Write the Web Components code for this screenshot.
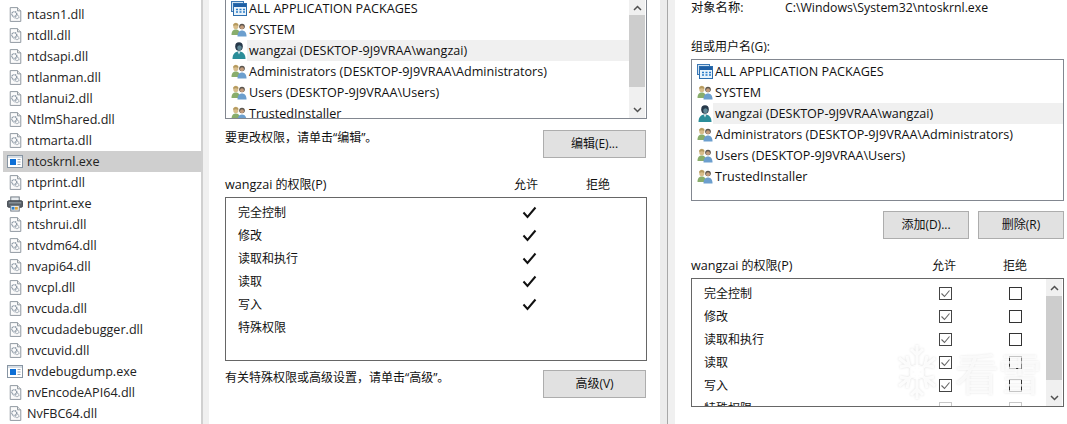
<!DOCTYPE html>
<html lang="zh"><head><meta charset="utf-8"><title>Permissions</title>
<style>
html,body{margin:0;padding:0;background:#fff}
body{width:1067px;height:424px;overflow:hidden;display:flex;font:12px/16px "Open Sans","Noto Sans CJK SC",sans-serif;color:#111}
.l{font-size:12.6px}
</style></head><body>
<file-pane>
<file-row icon="dll">ntasn1.dll</file-row><file-row icon="dll">ntdll.dll</file-row><file-row icon="dll">ntdsapi.dll</file-row><file-row icon="dll">ntlanman.dll</file-row><file-row icon="dll">ntlanui2.dll</file-row><file-row icon="dll">NtlmShared.dll</file-row><file-row icon="dll">ntmarta.dll</file-row><file-row icon="exe" selected>ntoskrnl.exe</file-row><file-row icon="dll">ntprint.dll</file-row><file-row icon="printer">ntprint.exe</file-row><file-row icon="dll">ntshrui.dll</file-row><file-row icon="dll">ntvdm64.dll</file-row><file-row icon="dll">nvapi64.dll</file-row><file-row icon="dll">nvcpl.dll</file-row><file-row icon="dll">nvcuda.dll</file-row><file-row icon="dll">nvcudadebugger.dll</file-row><file-row icon="dll">nvcuvid.dll</file-row><file-row icon="exe">nvdebugdump.exe</file-row><file-row icon="dll">nvEncodeAPI64.dll</file-row><file-row icon="dll">NvFBC64.dll</file-row>
</file-pane>
<pane-gap style="--w:8px;--a:0px;--b:2px;--line:#d0d0d0"></pane-gap>
<dialog-pane style="--w:451px;--pl:16px">
  <principal-list clip style="--h:119px;--w:422px">
    <principal-row icon="app">ALL APPLICATION PACKAGES</principal-row><principal-row icon="users">SYSTEM</principal-row><principal-row icon="user" selected>wangzai (DESKTOP-9J9VRAA\wangzai)</principal-row><principal-row icon="users">Administrators (DESKTOP-9J9VRAA\Administrators)</principal-row><principal-row icon="users">Users (DESKTOP-9J9VRAA\Users)</principal-row><principal-row icon="users">TrustedInstaller</principal-row>
    <scroll-bar slot="bar" up="15" thumb="72"></scroll-bar>
  </principal-list>
  <action-row style="--mt:11px;--w:421px"><span>要更改权限，请单击“编辑”。</span><win-button slot="end" style="--w:103px">编辑(E)...</win-button></action-row>
  <perm-head style="--mt:19px;--h1:259px;--hg:12px"><span class="l">wangzai</span> 的权限<span class="l">(P)</span></perm-head>
  <perm-box style="--mt:4px;--w:422px;--h:164px;--c1:252px;--g:9px">
    <perm-row mark="tick">完全控制</perm-row><perm-row mark="tick">修改</perm-row><perm-row mark="tick">读取和执行</perm-row><perm-row mark="tick">读取</perm-row><perm-row mark="tick">写入</perm-row><perm-row>特殊权限</perm-row>
  </perm-box>
  <action-row style="--mt:9px;--w:421px"><span>有关特殊权限或高级设置，请单击“高级”。</span><win-button slot="end" style="--w:103px">高级(V)</win-button></action-row>
</dialog-pane>
<pane-gap style="--w:15px;--a:7px;--b:8px;--line:#a8a8a8"></pane-gap>
<dialog-pane style="--w:392px;--pl:16px">
  <object-row><span>对象名称:</span><span slot="value">C:\Windows\System32\ntoskrnl.exe</span></object-row>
  <field-label style="--mt:23px">组或用户名(G):</field-label>
  <principal-list style="--h:142px;--w:373px;--mt:4px">
    <principal-row icon="app">ALL APPLICATION PACKAGES</principal-row><principal-row icon="users">SYSTEM</principal-row><principal-row icon="user" selected>wangzai (DESKTOP-9J9VRAA\wangzai)</principal-row><principal-row icon="users">Administrators (DESKTOP-9J9VRAA\Administrators)</principal-row><principal-row icon="users">Users (DESKTOP-9J9VRAA\Users)</principal-row><principal-row icon="users">TrustedInstaller</principal-row>
  </principal-list>
  <action-row style="--mt:10px;--w:373px;--gap:9px"><win-button slot="end" style="--w:86px">添加(D)...</win-button><win-button slot="end" style="--w:86px">删除(R)</win-button></action-row>
  <perm-head style="--mt:19px;--h1:212px;--hg:11px"><span class="l">wangzai</span> 的权限<span class="l">(P)</span></perm-head>
  <perm-box style="--mt:4px;--w:373px;--h:129px;--c1:201px;--g:10px">
    <perm-row mark="check" deny="box">完全控制</perm-row><perm-row mark="check" deny="box">修改</perm-row><perm-row mark="check" deny="box">读取和执行</perm-row><perm-row mark="check" deny="box">读取</perm-row><perm-row mark="check" deny="box">写入</perm-row><perm-row mark="dim" deny="dim">特殊权限</perm-row>
    <scroll-bar slot="bar" up="17" thumb="84"></scroll-bar>
    <snow-mark slot="over"></snow-mark>
  </perm-box>
</dialog-pane>
<script>
const ICONS={
dll:`<svg width="13" height="15" viewBox="0 0 16 18"><path d="M1.500 .5h9l4 4v13h-13z" fill="#fbfbfb" stroke="#8f979f" stroke-width="1.200"/><path d="M10.500 .5v4h4" fill="#e8e8e8" stroke="#8f979f" stroke-width="1.200"/><circle cx="6.500" cy="8.500" r="3" fill="none" stroke="#8d99a6" stroke-width="1.800" stroke-dasharray="1.400 .7"/><circle cx="10" cy="12" r="2.200" fill="none" stroke="#a2abb5" stroke-width="1.600" stroke-dasharray="1.200 .6"/><path d="M4 11l3 3" stroke="#b9c0c7"/></svg>`,
exe:`<svg width="16" height="13" viewBox="0 0 16 13"><rect x=".5" y=".5" width="15" height="12" fill="#fff" stroke="#8795a3"/><rect x="1" y="1" width="14" height="2" fill="#d8dfe6"/><rect x="3" y="4" width="6" height="6" fill="#0d6fd6"/><path d="M10.500 4.500h3M10.500 7h3M10.500 9.500h3" stroke="#98a4b0"/></svg>`,
printer:`<svg width="16" height="16" viewBox="0 0 17 16"><rect x="4" y=".5" width="9" height="5" fill="#e9edf0" stroke="#6c7680"/><rect x=".5" y="4.500" width="16" height="7" rx="1.500" fill="#596068" stroke="#454b52"/><rect x="2" y="6" width="13" height="1.500" fill="#8a939b"/><rect x="4" y="9.500" width="9" height="6" fill="#f4f6f8" stroke="#6c7680"/><rect x="5" y="11" width="3" height="3" fill="#2f7fc8"/><rect x="8.500" y="11" width="3" height="3" fill="#d9a23c"/></svg>`,
users:`<svg width="16" height="15" viewBox="0 0 16 15"><ellipse cx="4.800" cy="4" rx="2.600" ry="3.200" fill="#d8bd8b"/><path d="M2.200 2.500q2.600-3 5.200 0l-.3 1.500q-2.300-1.500-4.600 0z" fill="#b49a5f"/><path d="M.5 13c0-4 1.800-5.500 4.300-5.500S9 9 9 13z" fill="#89ad6c"/><circle cx="11" cy="4.500" r="2.800" fill="#59534c"/><ellipse cx="11" cy="5.300" rx="2" ry="2" fill="#c29c7c"/><path d="M6.500 14.500c0-4 1.800-6 4.500-6s4.500 2 4.500 6z" fill="#6c9fce"/></svg>`,
user:`<svg width="16" height="18" viewBox="0 0 16 18"><ellipse cx="8" cy="4.500" rx="3.800" ry="4.200" fill="#27394a"/><ellipse cx="8.500" cy="5.800" rx="2.300" ry="2.500" fill="#5f8796"/><path d="M1.500 17c0-5 2.500-7.500 6.500-7.500s6.500 2.500 6.500 7.500z" fill="#2a8d99"/><path d="M6.500 9.500l1.500 3 1.500-3z" fill="#d6e4e8"/></svg>`,
app:`<svg width="16" height="15" viewBox="0 0 16 15"><rect x=".5" y=".5" width="12" height="10" fill="#cfe2f3" stroke="#3c78b4"/><rect x="2.500" y="2.500" width="13" height="12" fill="#e9f3fb" stroke="#2c6eae"/><rect x="3" y="3" width="12" height="3" fill="#1f5fa5"/><path d="M5 8.500h2M8.500 8.500h2M12 8.500h2M5 11h2M8.500 11h2M12 11h2" stroke="#2a7cc7" stroke-width="1.400"/></svg>`};
const MARKS={
tick:`<svg width="15" height="13" viewBox="0 0 15 13"><path d="M1.500 6.500l4 4.500 8-9.500" fill="none" stroke="#111" stroke-width="2"/></svg>`,
check:`<svg width="13" height="13" viewBox="0 0 13 13"><rect x=".5" y=".5" width="12" height="12" fill="#fff" stroke="#444"/><path d="M2.500 6.500l3 3 5-6" fill="none" stroke="#666" stroke-width="1.100"/></svg>`,
box:`<svg width="13" height="13" viewBox="0 0 13 13"><rect x=".5" y=".5" width="12" height="12" fill="#fff" stroke="#333"/></svg>`,
dim:`<svg width="13" height="13" viewBox="0 0 13 13"><rect x=".5" y=".5" width="12" height="12" fill="#fff" stroke="#c8c8c8"/></svg>`};
function def(name,css,html){customElements.define(name,class extends HTMLElement{constructor(){super();this.attachShadow({mode:"open"})}connectedCallback(){if(this._d)return;this._d=1;this.shadowRoot.innerHTML=`<style>${css}</style>${typeof html=="function"?html(this):html}`}})}
def("win-icon",`:host{display:flex;width:16px;height:18px;align-items:center;justify-content:center;flex:none}svg{display:block}`,e=>ICONS[e.getAttribute("name")]);
def("file-pane",`:host{display:block;flex:none;width:201px;height:424px;padding:4px 0 0 3px;box-sizing:border-box;overflow:hidden}`,`<slot></slot>`);
def("file-row",`:host{display:flex;align-items:center;height:21px;padding-left:4px;gap:4px;color:#222;font-size:12.6px}:host([selected]){background:#cfcfcf}span{white-space:nowrap}`,e=>`<win-icon name="${e.getAttribute("icon")}"></win-icon><span><slot></slot></span>`);
def("pane-gap",`:host{display:block;flex:none;width:var(--w);height:424px;background:linear-gradient(90deg,#ececec var(--a),var(--line) var(--a),var(--line) var(--b),#f0f0f0 var(--b))}`,``);
def("dialog-pane",`:host{display:flex;flex-direction:column;flex:none;box-sizing:border-box;width:var(--w);height:424px;padding-left:var(--pl);overflow:hidden}`,`<slot></slot>`);
def("principal-list",`:host{display:flex;flex:none;box-sizing:border-box;width:var(--w);height:var(--h);margin-top:var(--mt,0);border:1px solid #828790;overflow:hidden}:host([clip]){border-top:0}.rows{flex:1;min-width:0;padding-top:1px}:host([clip]) .rows{padding-top:0;margin-top:-2px}.bar{display:flex}`,`<div class="rows"><slot></slot></div><div class="bar"><slot name="bar"></slot></div>`);
def("principal-row",`:host{display:flex;align-items:center;height:21px;padding-left:5px;white-space:nowrap;font-size:12.6px}.t{flex:1;height:21px;line-height:21px;padding-left:2px}:host([selected]) .t{background:#f0f0f0}`,e=>`<win-icon name="${e.getAttribute("icon")}"></win-icon><div class="t"><slot></slot></div>`);
def("scroll-bar",`:host{display:flex;flex-direction:column;align-items:stretch;width:16px;margin-right:1px;height:100%;background:#f0f0f0}.b{display:flex;align-items:center;justify-content:center;flex:none}.t{background:#cdcdcd;flex:none}.s{flex:1}.d{height:17px}`,e=>`<div class="b" style="height:${e.getAttribute("up")}px"><svg width="9" height="6" viewBox="0 0 9 6"><path d="M1 5l3.500-3.500L8 5" fill="none" stroke="#505050" stroke-width="1.500"/></svg></div><div class="t" style="height:${e.getAttribute("thumb")}px"></div><div class="s"></div><div class="b d"><svg width="9" height="6" viewBox="0 0 9 6"><path d="M1 1l3.500 3.500L8 1" fill="none" stroke="#505050" stroke-width="1.500"/></svg></div>`);
def("action-row",`:host{display:flex;align-items:flex-start;justify-content:space-between;flex:none;width:var(--w);height:28px;margin-top:var(--mt,0)}.e{display:flex;gap:var(--gap,0);margin-left:auto}`,`<slot></slot><div class="e"><slot name="end"></slot></div>`);
def("win-button",`:host{display:flex;align-items:center;justify-content:center;box-sizing:border-box;width:var(--w);height:28px;background:#e1e1e1;border:1px solid #adadad}`,`<slot></slot>`);
def("perm-head",`:host{display:grid;grid-template-columns:var(--h1) 60px 60px;column-gap:var(--hg);flex:none;height:16px;margin-top:var(--mt,0)}.c{text-align:center}`,`<div><slot></slot></div><div class="c">允许</div><div class="c">拒绝</div>`);
def("perm-box",`:host{display:flex;position:relative;flex:none;box-sizing:border-box;width:var(--w);height:var(--h);margin-top:var(--mt,0);border:1px solid #666;overflow:hidden}.rows{flex:1;min-width:0;padding-top:3px}.bar{display:flex}`,`<div class="rows"><slot></slot></div><div class="bar"><slot name="bar"></slot></div><slot name="over"></slot>`);
def("perm-row",`:host{display:grid;grid-template-columns:var(--c1) 60px 60px;column-gap:var(--g);align-items:center;height:23px;padding-left:12px}.c{display:flex;justify-content:center;align-items:center}svg{display:block}`,e=>{const m=e.getAttribute("mark"),d=e.getAttribute("deny");return `<div><slot></slot></div><div class="c">${m?MARKS[m]:""}</div><div class="c">${d?MARKS[d]:""}</div>`});
def("object-row",`:host{display:grid;grid-template-columns:94px 1fr;flex:none;height:16px;font-size:12.3px}`,`<div><slot></slot></div><div><slot name="value"></slot></div>`);
def("field-label",`:host{display:block;flex:none;height:16px;margin-top:var(--mt,0)}`,`<slot></slot>`);
def("snow-mark",`:host{position:absolute;left:205px;top:64px;display:flex;align-items:center;gap:18px;height:58px;pointer-events:none;filter:drop-shadow(0 0 1px rgba(0,0,0,.14))}.t{font:44px/50px "Noto Sans CJK SC",sans-serif;letter-spacing:-1px;white-space:nowrap;color:rgba(255,255,255,.72)}svg{display:block;flex:none}`,`<svg width="40" height="58" viewBox="0 0 40 58" fill="none" stroke="rgba(255,255,255,.85)" stroke-width="3"><path d="M20 2v54M2 15l36 28M38 15L2 43M14 6l6 6 6-6M14 52l6-6 6 6M3 24l9-2-2-9M37 24l-9-2 2-9M3 34l9 2-2 9M37 34l-9 2 2 9"/><circle cx="20" cy="29" r="6" fill="rgba(255,255,255,.85)"/></svg><span class="t">看雪</span>`);
</script>
</body></html>
